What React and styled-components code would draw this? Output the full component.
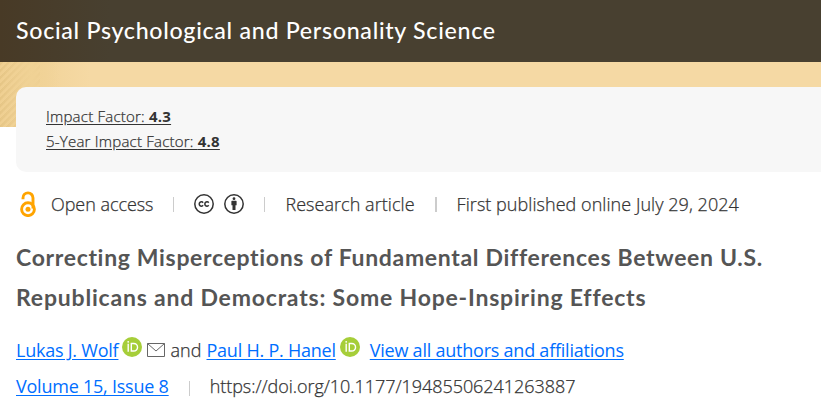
import styled, { createGlobalStyle } from "styled-components";

const GlobalStyle = createGlobalStyle`
  * {
    box-sizing: border-box;
  }
  body {
    margin: 0;
    overflow: hidden;
    background: #fff;
    color: #333;
    font-family: "Open Sans", "Noto Sans", sans-serif;
    font-weight: 300;
  }
`;

const OpenAccessIcon = () => (
  <svg width="16" height="26" viewBox="0 0 16 26" fill="none">
    <path
      d="M3 8.3V6.9a5 5 0 0 1 10 0v10.5"
      stroke="#ffa400"
      strokeWidth="2.9"
    />
    <circle cx="8" cy="18.2" r="6.4" stroke="#ffa400" strokeWidth="2.9" />
    <circle cx="8" cy="18.2" r="2.5" fill="#ffa400" />
  </svg>
);

const CcIcon = () => (
  <svg width="20" height="20" viewBox="0 0 20 20" fill="none" stroke="#333">
    <circle cx="10" cy="10" r="9.2" strokeWidth="1.5" />
    <path
      d="M9.1 8.7a2.15 2.15 0 1 0 0 2.6M14.7 8.7a2.15 2.15 0 1 0 0 2.6"
      strokeWidth="1.5"
    />
  </svg>
);

const AttributionIcon = () => (
  <svg width="20" height="20" viewBox="0 0 20 20" fill="#333">
    <circle cx="10" cy="10" r="9.2" fill="none" stroke="#333" strokeWidth="1.5" />
    <circle cx="10" cy="4.7" r="1.4" />
    <path d="M8 6.7h4a.6.6 0 0 1 .6.6v4h-1.1v4.8h-3v-4.8H7.4v-4a.6.6 0 0 1 .6-.6z" />
  </svg>
);

const OrcidIcon = () => (
  <svg width="20" height="20" viewBox="0 0 20 20">
    <circle cx="10" cy="10" r="10" fill="#a6ce39" />
    <circle cx="6.2" cy="4.8" r="0.9" fill="#fff" />
    <path d="M6.2 6.7v8" stroke="#fff" strokeWidth="1.4" />
    <path
      d="M9.3 6.5h2.5a3.5 3.5 0 0 1 0 7.5H9.3z"
      fill="none"
      stroke="#fff"
      strokeWidth="1.4"
    />
  </svg>
);

const MailIcon = () => (
  <svg width="18" height="14" viewBox="0 0 18 14" fill="none" stroke="#666">
    <path d="M.5.5h17v13H.5zM.5.5L9 8l8.5-7.5" />
  </svg>
);

export default function App() {
  return (
    <>
      <GlobalStyle />
      <Header>
        <JournalTitle>Social Psychological and Personality Science</JournalTitle>
      </Header>
      <Banner>
        <Metrics>
          <Metric href="#">
            Impact Factor: <b>4.3</b>
          </Metric>
          <Metric href="#">
            5-Year Impact Factor: <b>4.8</b>
          </Metric>
        </Metrics>
      </Banner>
      <Article>
        <MetaRow>
          <OpenAccessIcon />
          <OpenAccess>Open access</OpenAccess>
          <Divider />
          <Licence>
            <CcIcon />
            <AttributionIcon />
          </Licence>
          <Divider />
          <MetaText>Research article</MetaText>
          <Divider $dark />
          <MetaText>First published online July 29, 2024</MetaText>
        </MetaRow>
        <Title>
          <TitleLine $spacing="0.67px">
            Correcting Misperceptions of Fundamental Differences Between U.S.
          </TitleLine>
          <TitleLine $spacing="0.8px">
            Republicans and Democrats: Some Hope-Inspiring Effects
          </TitleLine>
        </Title>
        <Authors>
          <Link href="#">Lukas J. Wolf</Link>
          <Badge>
            <OrcidIcon />
          </Badge>
          <MailIcon />
          <And>and</And>
          <Link href="#">Paul H. P. Hanel</Link>
          <Badge $wide>
            <OrcidIcon />
          </Badge>
          <Link href="#">View all authors and affiliations</Link>
        </Authors>
        <Issue>
          <Link href="#">Volume 15, Issue 8</Link>
          <Divider $low />
          <Doi>https://doi.org/10.1177/19485506241263887</Doi>
        </Issue>
      </Article>
    </>
  );
}

const Header = styled.header`
  display: flex;
  align-items: center;
  height: 62px;
  padding: 0 16px 3px;
  background: linear-gradient(90deg, #483a26 0, #484030 110px);
`;

const JournalTitle = styled.h2`
  margin: 0;
  color: #fff;
  font-family: Lato, sans-serif;
  font-size: 23.2px;
  font-weight: 500;
  letter-spacing: 0.71px;
  white-space: nowrap;
`;

const Banner = styled.section`
  padding: 25px 0 0 16px;
  background:
    linear-gradient(90deg, #f0d29500, #f0d295 32px, #f0d29500 60px) 0 0 / 60px
      65px no-repeat,
    repeating-linear-gradient(135deg, #d9b87566 0 2px, #f5daa400 3px 5px) 0 0 /
      40px 65px no-repeat,
    linear-gradient(90deg, #efcf91 0, #f5d9a4 90px) 0 0 / 100% 65px no-repeat;
`;

const Metrics = styled.div`
  display: flex;
  flex-direction: column;
  align-items: flex-start;
  height: 85px;
  padding: 17px 30px;
  background: #f7f7f7;
  border-radius: 10px 0 0 10px;
`;

const Metric = styled.a`
  color: #333;
  font-size: 15px;
  line-height: 25px;
  letter-spacing: 0.22px;
  text-underline-offset: 2px;
  white-space: nowrap;
  -webkit-text-stroke: 0.25px #333;
  b {
    font-weight: 700;
    -webkit-text-stroke: 0;
  }
`;

const Article = styled.main`
  padding: 0 16px;
  font-size: 18px;
  white-space: nowrap;
`;

const MetaRow = styled.div`
  display: flex;
  align-items: center;
  height: 26px;
  margin-top: 19px;
  padding-left: 4px;
`;

const MetaText = styled.span`
  letter-spacing: 0.05px;
  -webkit-text-stroke: 0.25px #333;
`;

const OpenAccess = styled(MetaText)`
  margin-left: 15px;
  letter-spacing: -0.05px;
`;

const Divider = styled.i`
  width: ${({ $dark }) => ($dark ? 2 : 1)}px;
  height: 15px;
  margin: ${({ $low }) => ($low ? 4 : 0)}px 20px 0;
  background: #ccc;
`;

const Licence = styled.span`
  display: flex;
  gap: 10px;
`;

const Title = styled.h1`
  margin: 20px 0 0;
  color: #555;
  font-family: Lato, sans-serif;
  font-size: 23px;
  font-weight: 700;
  line-height: 40px;
`;

const TitleLine = styled.span`
  display: block;
  letter-spacing: ${({ $spacing }) => $spacing};
`;

const Authors = styled.div`
  display: flex;
  align-items: center;
  height: 36px;
  margin-top: 15px;
`;

const Issue = styled.div`
  display: flex;
  align-items: center;
  height: 36px;
`;

const Link = styled.a`
  color: #006eff;
  font-weight: 400;
  letter-spacing: -0.23px;
  text-underline-offset: 2px;
`;

const Doi = styled(MetaText)`
  letter-spacing: -0.05px;
`;

const Badge = styled.span`
  display: flex;
  margin: 0 ${({ $wide }) => ($wide ? 10 : 5)}px 7px 4px;
`;

const And = styled(MetaText)`
  margin: 0 5px;
`;
